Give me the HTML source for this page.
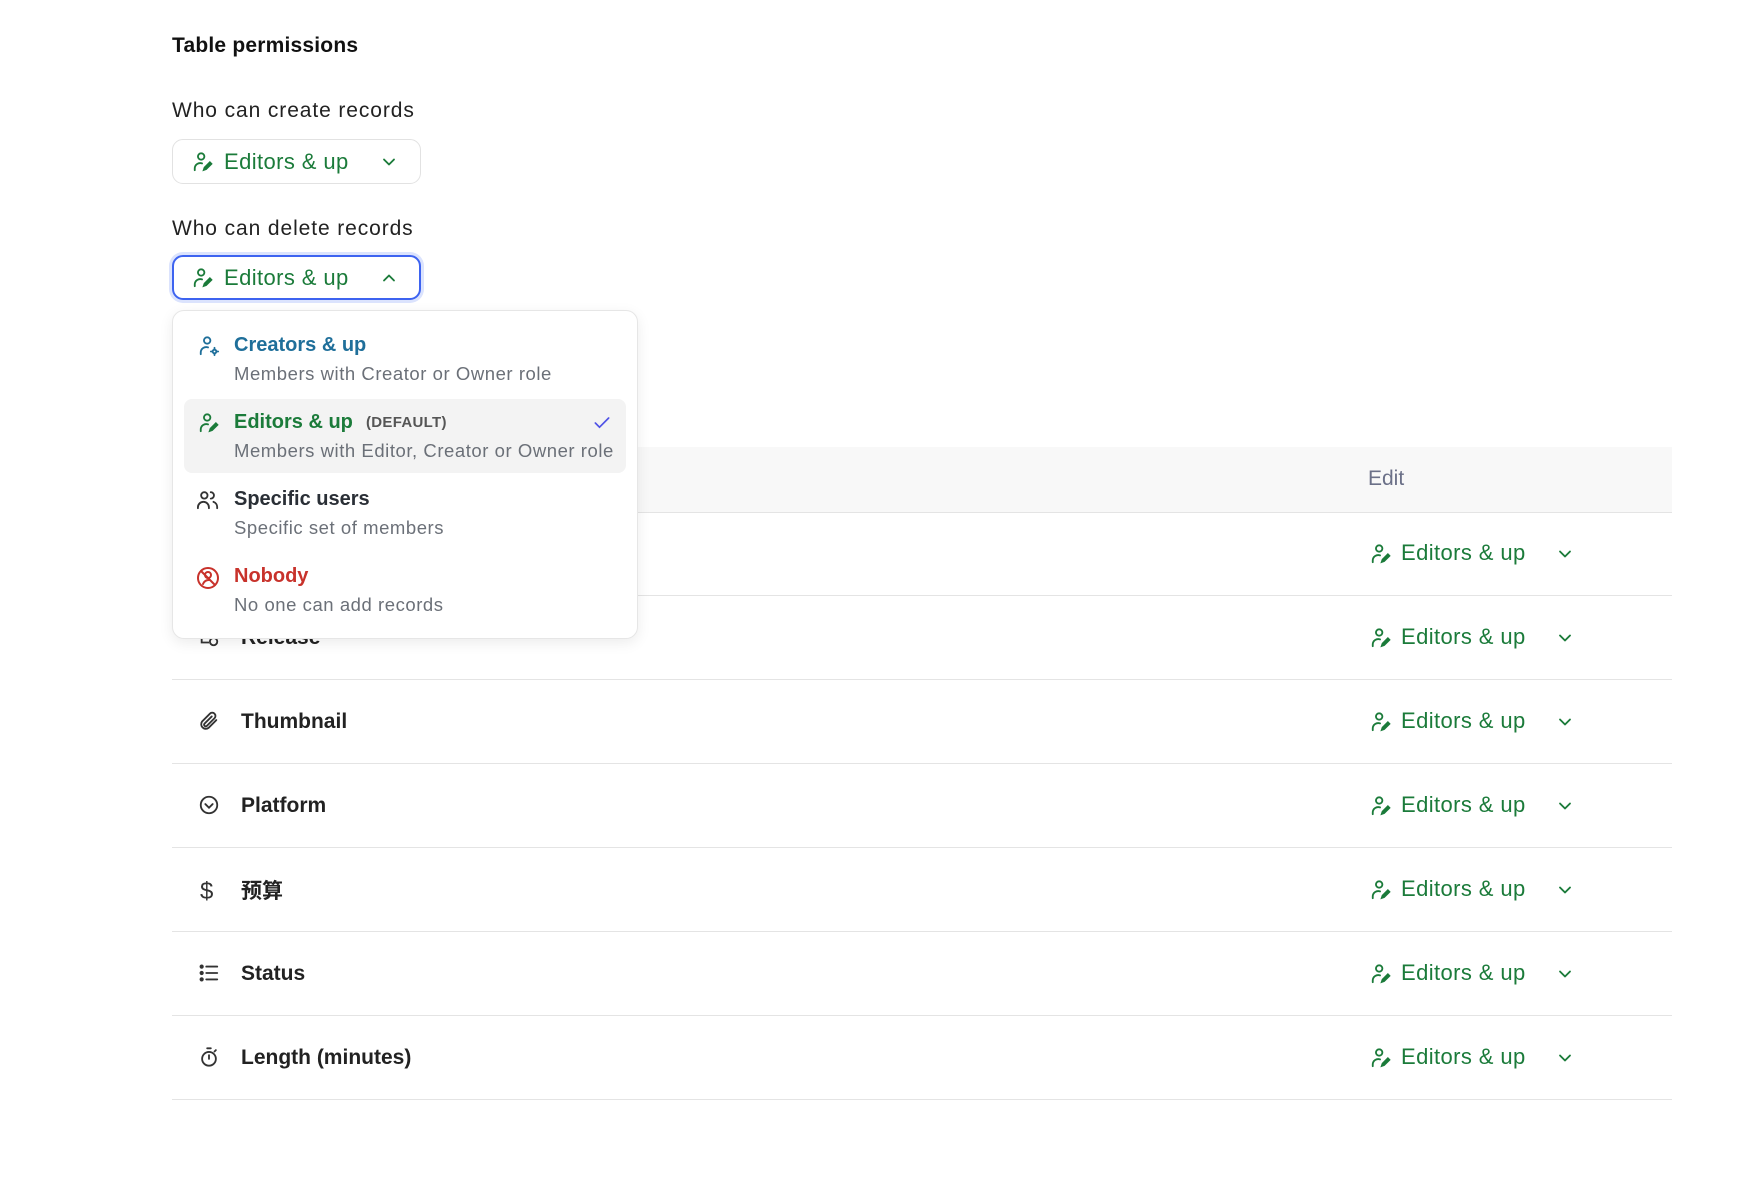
<!DOCTYPE html>
<html><head><meta charset="utf-8"><style>
body{margin:0;width:1751px;height:1199px;background:#fff;font-family:"Liberation Sans","Noto Sans CJK SC",sans-serif;position:relative;overflow:hidden;color:#1f2328}
.a{position:absolute}
.h{left:172px;top:34px;font-size:21px;font-weight:bold;color:#111;letter-spacing:0.2px}
.lbl{font-size:21px;color:#222;letter-spacing:0.9px}
.btn{left:172px;width:249px;height:45px;border:1px solid #e2e2e2;border-radius:11px;box-sizing:border-box}
.btn.on{border:2px solid #3d63f0;box-shadow:0 0 0 3px #dbe3fd}
.g{color:#1b7b3a}
.et{font-size:22px;color:#1b7b3a;white-space:nowrap;letter-spacing:0.4px}
.hl{left:172px;width:1500px;height:65px;top:447px;background:#f8f8f8;border-bottom:1px solid #e4e4e4}
.row{left:172px;width:1500px;height:84px;border-bottom:1px solid #e4e4e4;box-sizing:border-box}
.fname{font-size:21px;font-weight:bold;color:#222;left:69px;top:30px}
.ficon{left:26px;top:30px}
.dd{left:172px;top:310px;width:466px;height:329px;background:#fff;border:1px solid #e6e6e6;border-radius:12px;box-shadow:0 4px 14px rgba(0,0,0,.08);box-sizing:border-box}
.it{font-size:20px;font-weight:bold}
.ds{font-size:18.5px;color:#6b7078;letter-spacing:0.55px;white-space:nowrap}
</style></head><body>
<svg width="0" height="0" style="position:absolute"><defs>
<symbol id="ue" viewBox="0 0 24 24"><g fill="none" stroke="currentColor" stroke-width="2" stroke-linecap="round"><circle cx="10" cy="6" r="3.5"/><path d="M3 21v-2a6 6 0 0 1 8-5.5"/><path d="M12.5 21l1-3 6-6 2 2-6 6z" fill="currentColor" stroke-width="1.5"/></g></symbol>
<symbol id="chd" viewBox="0 0 24 24"><path d="M6 9l6 6 6-6" fill="none" stroke="currentColor" stroke-width="2.2" stroke-linecap="round" stroke-linejoin="round"/></symbol>
</defs></svg>

<div class="a h">Table permissions</div>
<div class="a lbl" style="left:172px;top:99px">Who can create records</div>
<div class="a btn" style="top:139px"><svg class="a g" style="left:19px;top:11px" width="22" height="22"><use href="#ue"/></svg><span class="a et" style="left:51px;top:9px">Editors &amp; up</span><svg class="a g" style="left:206px;top:12px" width="20" height="20"><use href="#chd"/></svg></div>
<div class="a lbl" style="left:172px;top:217px">Who can delete records</div>
<div class="a btn on" style="top:255px"><svg class="a g" style="left:18px;top:10px" width="22" height="22"><use href="#ue"/></svg><span class="a et" style="left:50px;top:8px">Editors &amp; up</span><svg class="a g" style="left:205px;top:11px;transform:rotate(180deg)" width="20" height="20"><use href="#chd"/></svg></div>

<div class="a hl"><span class="a" style="left:1196px;top:20px;font-size:21px;color:#6b7088">Edit</span></div>

<div class="a" style="top:512px;left:0">
<div class="a row" style="top:0"></div>
<div class="a row" style="top:84px"><svg class="a ficon" width="22" height="22" viewBox="0 0 24 24" fill="none" stroke="#333" stroke-width="2"><path d="M4 4v14h8"/><circle cx="17" cy="17" r="4"/></svg><span class="a fname">Release</span></div>
<div class="a row" style="top:168px"><svg class="a ficon" width="22" height="22" viewBox="0 0 24 24" fill="none" stroke="#333" stroke-width="2" stroke-linecap="round"><path d="M20 11l-8.5 8.5a5 5 0 0 1-7-7L13 4a3.4 3.4 0 0 1 5 5l-8.5 8.5a1.8 1.8 0 0 1-2.5-2.5L15 7"/></svg><span class="a fname">Thumbnail</span></div>
<div class="a row" style="top:252px"><svg class="a ficon" width="22" height="22" viewBox="0 0 24 24" fill="none" stroke="#333" stroke-width="2" stroke-linecap="round"><circle cx="12" cy="12" r="9"/><path d="M8 11l4 4 4-4"/></svg><span class="a fname">Platform</span></div>
<div class="a row" style="top:336px"><span class="a" style="left:28px;top:30px;font-size:24px;color:#333">$</span><span class="a fname" style="top:27px">预算</span></div>
<div class="a row" style="top:420px"><svg class="a ficon" width="22" height="22" viewBox="0 0 24 24" fill="none" stroke="#333" stroke-width="2" stroke-linecap="round"><path d="M9 5h12M9 12h12M9 19h12"/><circle cx="4" cy="5" r="1.3" fill="#333"/><circle cx="4" cy="12" r="1.3" fill="#333"/><circle cx="4" cy="19" r="1.3" fill="#333"/></svg><span class="a fname">Status</span></div>
<div class="a row" style="top:504px"><svg class="a ficon" width="22" height="22" viewBox="0 0 24 24" fill="none" stroke="#333" stroke-width="2" stroke-linecap="round"><circle cx="12" cy="14" r="7.5"/><path d="M10 2.5h4M12 14v-4M18 6l1.5-1.5"/></svg><span class="a fname">Length (minutes)</span></div>
</div>

<div class="a" style="left:0;top:0">
<div class="a" style="top:543px"><svg class="a g" style="left:1370px" width="22" height="22"><use href="#ue"/></svg><span class="a et" style="left:1401px;top:-3px">Editors &amp; up</span><svg class="a g" style="left:1555px;top:1px" width="20" height="20"><use href="#chd"/></svg></div>
<div class="a" style="top:627px"><svg class="a g" style="left:1370px" width="22" height="22"><use href="#ue"/></svg><span class="a et" style="left:1401px;top:-3px">Editors &amp; up</span><svg class="a g" style="left:1555px;top:1px" width="20" height="20"><use href="#chd"/></svg></div>
<div class="a" style="top:711px"><svg class="a g" style="left:1370px" width="22" height="22"><use href="#ue"/></svg><span class="a et" style="left:1401px;top:-3px">Editors &amp; up</span><svg class="a g" style="left:1555px;top:1px" width="20" height="20"><use href="#chd"/></svg></div>
<div class="a" style="top:795px"><svg class="a g" style="left:1370px" width="22" height="22"><use href="#ue"/></svg><span class="a et" style="left:1401px;top:-3px">Editors &amp; up</span><svg class="a g" style="left:1555px;top:1px" width="20" height="20"><use href="#chd"/></svg></div>
<div class="a" style="top:879px"><svg class="a g" style="left:1370px" width="22" height="22"><use href="#ue"/></svg><span class="a et" style="left:1401px;top:-3px">Editors &amp; up</span><svg class="a g" style="left:1555px;top:1px" width="20" height="20"><use href="#chd"/></svg></div>
<div class="a" style="top:963px"><svg class="a g" style="left:1370px" width="22" height="22"><use href="#ue"/></svg><span class="a et" style="left:1401px;top:-3px">Editors &amp; up</span><svg class="a g" style="left:1555px;top:1px" width="20" height="20"><use href="#chd"/></svg></div>
<div class="a" style="top:1047px"><svg class="a g" style="left:1370px" width="22" height="22"><use href="#ue"/></svg><span class="a et" style="left:1401px;top:-3px">Editors &amp; up</span><svg class="a g" style="left:1555px;top:1px" width="20" height="20"><use href="#chd"/></svg></div>
</div>

<div class="a dd">
<svg class="a" style="left:25px;top:24px;color:#1f6f9a" width="22" height="22" viewBox="0 0 24 24" fill="none" stroke="currentColor" stroke-width="2" stroke-linecap="round"><circle cx="10" cy="6" r="3.5"/><path d="M3 21v-2a6 6 0 0 1 8-5.5"/><circle cx="18" cy="18" r="2" /><path d="M18 14v1.5M18 20.5V22M14 18h1.5M20.5 18H22"/></svg>
<span class="a it" style="left:61px;top:23px;color:#1f6f9a">Creators &amp; up</span>
<span class="a ds" style="left:61px;top:52px">Members with Creator or Owner role</span>
<div class="a" style="left:11px;top:88px;width:442px;height:74px;background:#f3f3f3;border-radius:8px"></div>
<svg class="a g" style="left:25px;top:101px" width="22" height="22"><use href="#ue"/></svg>
<span class="a it g" style="left:61px;top:100px">Editors &amp; up</span>
<span class="a" style="left:193px;top:103px;font-size:15px;font-weight:bold;color:#555;letter-spacing:0.3px">(DEFAULT)</span>
<svg class="a" style="left:419px;top:102px" width="20" height="20" viewBox="0 0 24 24" fill="none" stroke="#4f52e6" stroke-width="2" stroke-linecap="round"><path d="M4 12l5 5L20 6"/></svg>
<span class="a ds" style="left:61px;top:129px">Members with Editor, Creator or Owner role</span>
<svg class="a" style="left:23px;top:178px" width="24" height="22" viewBox="0 0 26 24" fill="none" stroke="#333" stroke-width="2" stroke-linecap="round"><circle cx="9" cy="7" r="3.5"/><path d="M2 21v-1a6 6 0 0 1 12 0v1M16 3.5a3.5 3.5 0 0 1 0 7M19 14a6 6 0 0 1 4 6v1"/></svg>
<span class="a it" style="left:61px;top:177px;color:#2a2f36">Specific users</span>
<span class="a ds" style="left:61px;top:206px">Specific set of members</span>
<svg class="a" style="left:23px;top:255px" width="24" height="24" viewBox="0 0 24 24" fill="none" stroke="#c8322b" stroke-width="2" stroke-linecap="round"><circle cx="12" cy="12" r="10"/><path d="M5 5l14 14"/><circle cx="12" cy="9" r="3"/><path d="M7 18a6 6 0 0 1 6-4"/></svg>
<span class="a it" style="left:61px;top:254px;color:#c8322b">Nobody</span>
<span class="a ds" style="left:61px;top:283px">No one can add records</span>
</div>
</body></html>
